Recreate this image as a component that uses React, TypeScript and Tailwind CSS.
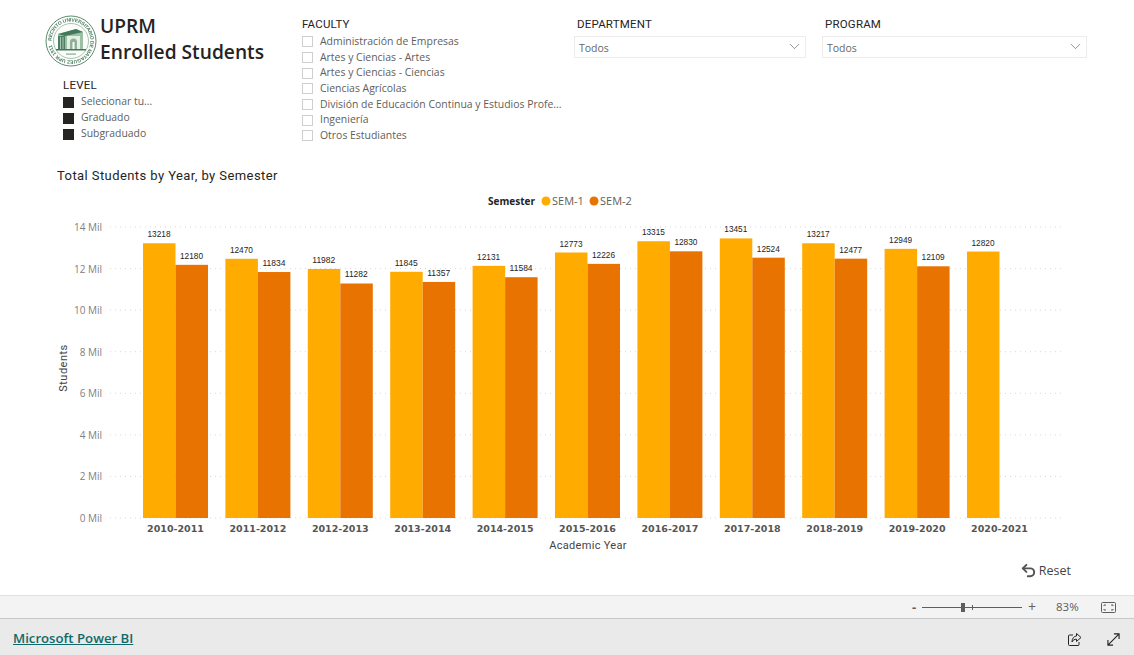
import { ChevronDown, Undo2 } from 'lucide-react'

const sem1 = [13218, 12470, 11982, 11845, 12131, 12773, 13315, 13451, 13217, 12949, 12820]
const sem2 = [12180, 11834, 11282, 11357, 11584, 12226, 12830, 12524, 12477, 12109]
const years = ['2010-2011', '2011-2012', '2012-2013', '2013-2014', '2014-2015', '2015-2016', '2016-2017', '2017-2018', '2018-2019', '2019-2020', '2020-2021']
const faculties = ['Administración de Empresas', 'Artes y Ciencias - Artes', 'Artes y Ciencias - Ciencias', 'Ciencias Agrícolas', 'División de Educación Continua y Estudios Profe...', 'Ingeniería', 'Otros Estudiantes']
const levels = ['Selecionar tu...', 'Graduado', 'Subgraduado']

// chart svg starts at page y = 190
const baseY = 328
const scale = 291 / 14000
const barX = (i: number) => 143 + i * 82.4

const Seal = () => (
  <svg width="52" height="52" viewBox="0 0 52 52" className="shrink-0 blur-[0.3px]">
    <circle cx="26" cy="26" r="25" fill="#fff" stroke="#5d8a6c" strokeWidth="1" />
    <circle cx="26" cy="26" r="17.5" fill="#fbfdfb" stroke="#6d9a7b" strokeWidth="0.6" />
    <defs>
      <path id="sealRing" d="M26 26 m-19.5 0 a19.5 19.5 0 1 1 39 0 a19.5 19.5 0 1 1 -39 0" />
    </defs>
    <text fontSize="5" fill="#4d7d5e" fontFamily="Liberation Sans" fontWeight="700" textLength="118">
      <textPath href="#sealRing">RECINTO UNIVERSITARIO DE MAYAGUEZ UPR 1911</textPath>
    </text>
    <path d="M13 19 L31 14 L38 17 L38 34 L13 34 Z" fill="#9dbfa6" />
    <path d="M13 19 L31 14 L38 17 L20 21 Z" fill="#44785a" />
    <rect x="13" y="21" width="7" height="13" fill="#4b8060" />
    <rect x="15" y="22" width="1" height="12" fill="#a9c7b1" />
    <rect x="17.5" y="22" width="1" height="12" fill="#a9c7b1" />
    <rect x="22" y="21" width="13" height="13" fill="#e6efe6" />
    <path d="M25 34 V27 a3.5 3.5 0 0 1 7 0 V34 Z" fill="#8db096" />
    <rect x="27.5" y="27" width="2" height="7" fill="#f7faf7" />
    <rect x="11" y="34" width="30" height="1.5" fill="#44785a" />
    <rect x="21" y="38.5" width="10" height="1.2" fill="#85aa90" />
  </svg>
)

const Dropdown = () => (
  <div className="flex h-[22px] items-center justify-between border border-[#ececec] pl-1 pr-[2px] pt-[4px] text-[10.5px] text-[#666666]">
    <span>Todos</span>
    <ChevronDown size={17} strokeWidth={1} className="-mt-[6px] text-[#666666]" />
  </div>
)

const Chart = () => (
  <svg width="1134" height="370" className="block">
    {[0, 2, 4, 6, 8, 10, 12, 14].map((m) => {
      const y = baseY - m * 1000 * scale
      return (
        <g key={m}>
          <line x1="110" x2="1065" y1={y} y2={y} stroke="#d9d9d9" strokeWidth="1" strokeDasharray="1 4" />
          <text x="102" y={y + 4} textAnchor="end" fontSize="10" fill="#808080" fontFamily="Open Sans">{m} Mil</text>
        </g>
      )
    })}
    <text x="488" y="15" fontSize="11" fontWeight="700" fill="#252423" fontFamily="Open Sans" textLength="47" lengthAdjust="spacingAndGlyphs">Semester</text>
    <circle cx="546" cy="11" r="4.5" fill="#ffab00" />
    <text x="552" y="15" fontSize="11" fill="#605e5c" fontFamily="Open Sans">SEM-1</text>
    <circle cx="594" cy="11" r="4.5" fill="#e97300" />
    <text x="600" y="15" fontSize="11" fill="#605e5c" fontFamily="Open Sans">SEM-2</text>
    {sem1.map((v, i) => {
      const h = v * scale
      const x = barX(i)
      return (
        <g key={years[i]}>
          <rect x={x} y={baseY - h} width="32.5" height={h} fill="#ffab00" />
          <text x={x + 16} y={baseY - h - 6} textAnchor="middle" fontSize="9.5" fill="#252423" fontFamily="Liberation Sans" textLength="23" lengthAdjust="spacingAndGlyphs">{v}</text>
          <text x={x + 32.5} y={342} textAnchor="middle" fontSize="9.5" fontWeight="700" fill="#555555" fontFamily="DejaVu Sans">{years[i]}</text>
        </g>
      )
    })}
    {sem2.map((v, i) => {
      const h = v * scale
      const x = barX(i) + 32.5
      return (
        <g key={years[i]}>
          <rect x={x} y={baseY - h} width="32.5" height={h} fill="#e97300" />
          <text x={x + 16} y={baseY - h - 6} textAnchor="middle" fontSize="9.5" fill="#252423" fontFamily="Liberation Sans" textLength="23" lengthAdjust="spacingAndGlyphs">{v}</text>
        </g>
      )
    })}
    <text x="588" y="359" textAnchor="middle" fontSize="11" fill="#444444" fontFamily="Roboto" letterSpacing="0.3">Academic Year</text>
    <text transform="translate(67 178) rotate(-90)" textAnchor="middle" fontSize="11" fill="#444444" fontFamily="Roboto" letterSpacing="0.5">Students</text>
  </svg>
)

export default function App() {
  return (
    <div className="flex h-[655px] w-full flex-col overflow-hidden bg-white font-['Open_Sans',sans-serif]">
      <div className="flex h-[168px] shrink-0 pl-[45px] pt-[15px]">
        <div className="w-[257px] shrink-0">
          <div className="flex gap-[3px]">
            <Seal />
            <h1 className="-mt-[2px] text-[19.2px] font-semibold leading-[26px] text-[#252423]">UPRM<br />Enrolled Students</h1>
          </div>
          <div className="ml-[18px] mt-[11px]">
            <h2 className="font-['Roboto',sans-serif] text-[11.5px] leading-[14px] tracking-[0.2px] text-[#252423]">LEVEL</h2>
            <ul className="mt-[2px]">
              {levels.map((l) => (
                <li key={l} className="flex h-4 items-center gap-[7px] text-[10.4px] text-[#605e5c]">
                  <span className="h-[11px] w-[11px] bg-[#252423]" />
                  {l}
                </li>
              ))}
            </ul>
          </div>
        </div>
        <div className="w-[272px] shrink-0 pt-[2px]">
          <h2 className="font-['Roboto',sans-serif] text-[11.5px] leading-[14px] tracking-[0.2px] text-[#252423]">FACULTY</h2>
          <ul className="mt-[3px]">
            {faculties.map((f) => (
              <li key={f} className="flex h-[15.7px] items-center gap-[7px] whitespace-nowrap text-[10.45px] text-[#605e5c]">
                <span className="h-[11px] w-[11px] border border-[#cfcfcf]" />
                {f}
              </li>
            ))}
          </ul>
        </div>
        <div className="w-[248px] shrink-0 pt-[2px]">
          <h2 className="ml-[3px] font-['Roboto',sans-serif] text-[11.5px] leading-[14px] tracking-[0.2px] text-[#252423]">DEPARTMENT</h2>
          <div className="mt-[5px] w-[232px]"><Dropdown /></div>
        </div>
        <div className="w-[265px] shrink-0 pt-[2px]">
          <h2 className="ml-[3px] font-['Roboto',sans-serif] text-[11.5px] leading-[14px] tracking-[0.2px] text-[#252423]">PROGRAM</h2>
          <div className="mt-[5px]"><Dropdown /></div>
        </div>
      </div>

      <div className="h-[22px] shrink-0 pl-[57px] font-['Roboto',sans-serif] text-[13px] leading-[15px] tracking-[0.42px] text-[#252423]">Total Students by Year, by Semester</div>
      <Chart />

      <div className="flex h-[35px] shrink-0 justify-end pr-[63px]">
        <div className="flex h-[22px] items-center gap-[2px] text-[12.5px] text-[#444444]">
          <Undo2 size={17} strokeWidth={2.8} className="-mt-[2px] text-[#555555]" />
          Reset
        </div>
      </div>

      <div className="flex h-[24px] shrink-0 items-center border-y border-b-[#c8c8c8] border-t-[#e0e0e0] bg-[#f3f3f3] pl-[912px] text-[#605e5c]">
        <span className="w-[10px] text-[13px] font-bold leading-none">-</span>
        <div className="relative h-[1px] w-[100px] bg-[#605e5c]">
          <span className="absolute left-[39px] top-[-4px] h-[9px] w-[4px] bg-[#605e5c]" />
          <span className="absolute left-[50px] top-[-2px] h-[5px] w-[1px] bg-[#605e5c]" />
        </div>
        <span className="ml-[6px] w-[28px] text-[14px] leading-none">+</span>
        <span className="w-[45px] text-[11.5px]">83%</span>
        <svg width="15" height="11" viewBox="0 0 15 11" fill="none" stroke="#605e5c">
          <rect x="0.5" y="0.5" width="14" height="10" rx="1" />
          <path d="M3 4V3H5M10 3H12V4M12 7V8H10M5 8H3V7" />
        </svg>
      </div>

      <div className="flex flex-1 items-center bg-[#eaeaea] pl-[13px] pt-[4px]">
        <a className="text-[13.2px] font-semibold text-[#0f6b6b] underline" href="#">Microsoft Power BI</a>
        <svg width="15" height="15" viewBox="0 0 15 15" fill="none" stroke="#252423" className="ml-auto">
          <path d="M6 3H2.5A1 1 0 0 0 1.5 4V12.5A1 1 0 0 0 2.5 13.5H11A1 1 0 0 0 12 12.5V10" />
          <path d="M9.5 1.5L14 5.5L9.5 9.5V7.2C7.5 7.2 6 8 5 10C5 6.5 6.8 4.2 9.5 4Z" />
        </svg>
        <svg width="13" height="13" viewBox="0 0 14 14" fill="none" stroke="#252423" strokeWidth="1.2" className="ml-[25px] mr-[14px]">
          <path d="M1 13L13 1M7.5 1H13V6.5M1 7.5V13H6.5" />
        </svg>
      </div>
    </div>
  )
}
